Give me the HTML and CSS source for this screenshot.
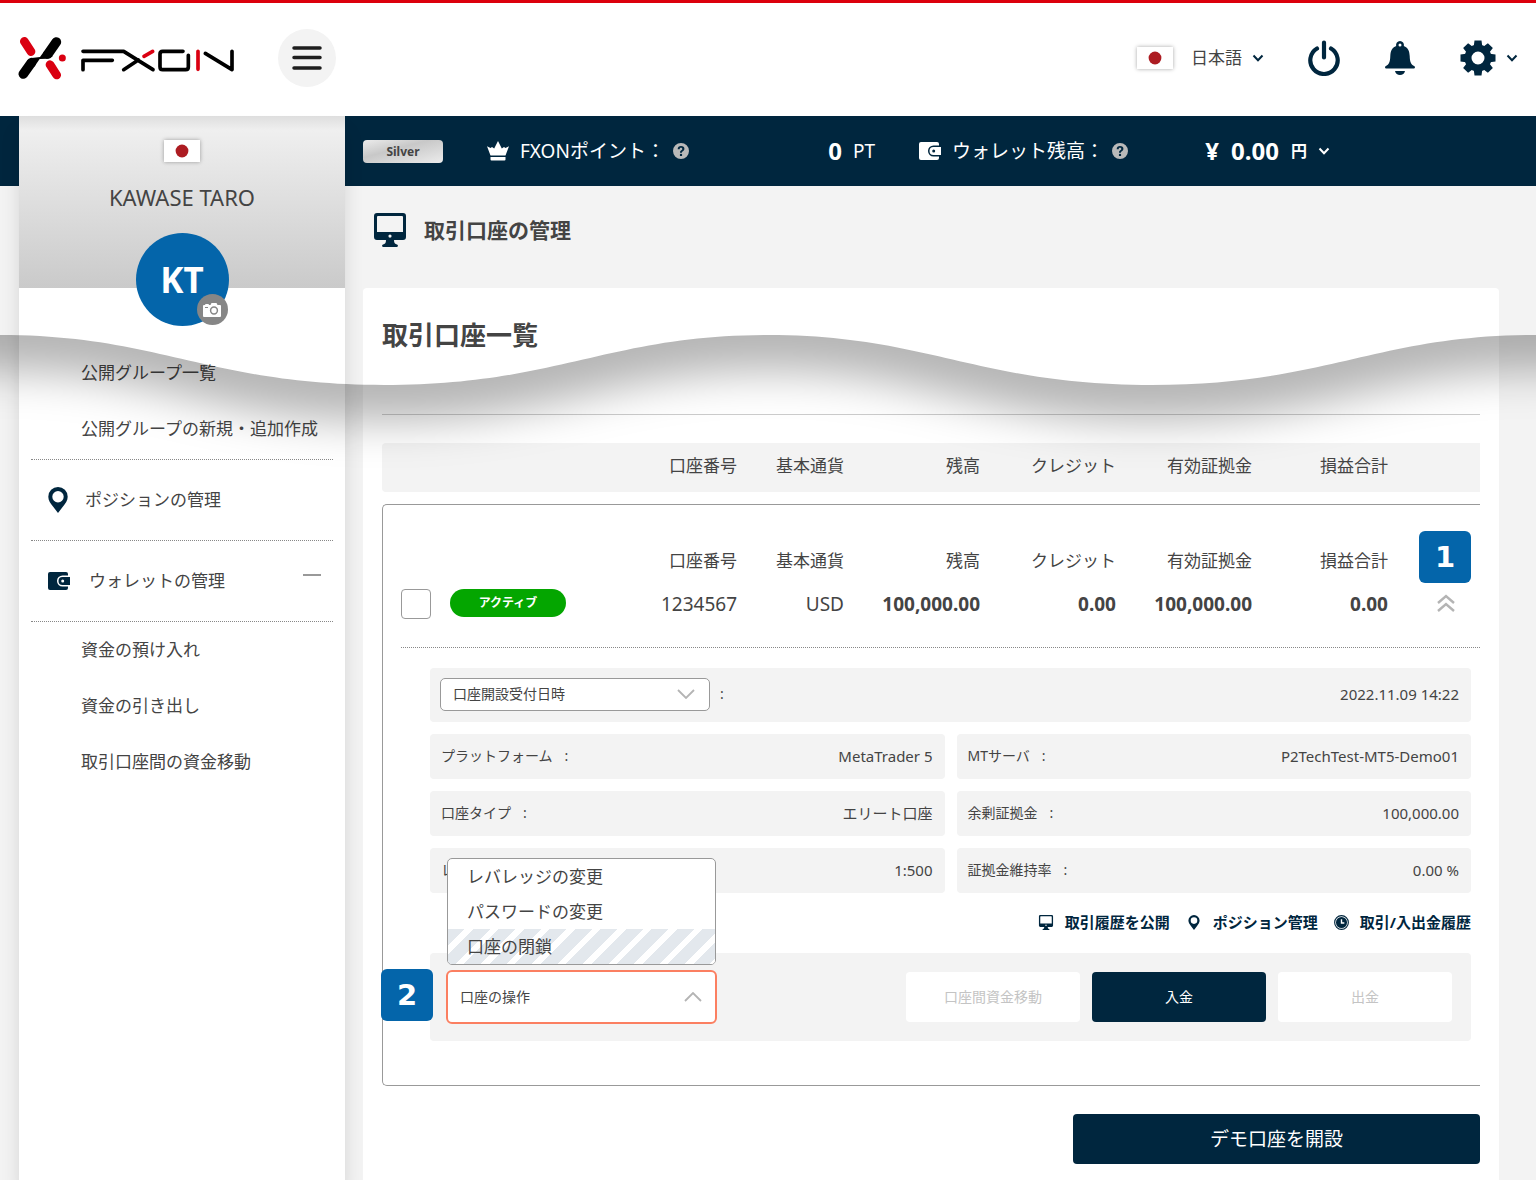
FILE: index.html
```html
<!DOCTYPE html>
<html lang="ja">
<head>
<meta charset="utf-8">
<meta name="viewport" content="width=device-width, initial-scale=1">
<title>取引口座の管理 | FXON</title>
<link rel="stylesheet" href="styles.css">
</head>
<body>
<svg class="sprite" aria-hidden="true">
  <symbol id="i-monitor" viewBox="0 0 32 34"><path fill-rule="evenodd" d="M3 0h26a3 3 0 0 1 3 3v21a3 3 0 0 1-3 3h-9c0 3 1 4 3 4.500a1.300 1.300 0 0 1 0 2.500H9a1.300 1.300 0 0 1 0-2.500c2-.5 3-1.500 3-4.500H3a3 3 0 0 1-3-3V3a3 3 0 0 1 3-3zm1 3a1 1 0 0 0-1 1v15h26V4a1 1 0 0 0-1-1zm12 18.500a1.600 1.600 0 1 0 0 3.200 1.600 1.600 0 0 0 0-3.200z"/></symbol>
  <symbol id="i-pin" viewBox="0 0 20 26"><path fill-rule="evenodd" d="M10 0a9.700 9.700 0 0 1 9.700 9.700c0 4-2.300 6.500-4.700 9.800L10 26l-5-6.500C2.600 16.200.3 13.700.3 9.700A9.700 9.700 0 0 1 10 0zm0 4a5.700 5.700 0 1 0 0 11.400A5.700 5.700 0 0 0 10 4z"/></symbol>
  <symbol id="i-wallet" viewBox="0 0 22 18"><path fill-rule="evenodd" d="M2 0h16a2 2 0 0 1 2 2v1.500h-5.500a5.500 5.500 0 0 0 0 11H20V16a2 2 0 0 1-2 2H2a2 2 0 0 1-2-2V2a2 2 0 0 1 2-2zm12.500 5H22v8h-7.500a4 4 0 0 1 0-8zm.2 2.500a1.500 1.500 0 1 0 0 3 1.500 1.500 0 0 0 0-3z"/></symbol>
  <symbol id="i-chevron" viewBox="0 0 12 8"><path d="M1.500 1.500 6 6.300l4.500-4.800" fill="none" stroke="currentColor" stroke-width="2"/></symbol>
  <symbol id="i-chevron-thin" viewBox="0 0 18 10"><path d="M1 1l8 8 8-8" fill="none" stroke="currentColor" stroke-width="1.800"/></symbol>
  <symbol id="i-help" viewBox="0 0 16 16"><path fill-rule="evenodd" d="M8 0a8 8 0 1 1 0 16A8 8 0 0 1 8 0zM4.700 6.200h2C6.700 5.300 7.200 4.800 8 4.800s1.300.4 1.300 1.100c0 .6-.3.900-1 1.400C7.400 7.900 7 8.500 7 9.700h1.900c0-.8.300-1 1-1.500.9-.6 1.500-1.300 1.500-2.400C11.400 4.200 10.200 3.100 8 3.100 6 3.100 4.700 4.200 4.700 6.200zM8 10.700a1.200 1.200 0 1 0 0 2.400 1.200 1.200 0 0 0 0-2.400z"/></symbol>
  <symbol id="i-crown" viewBox="0 0 22 20"><path d="M11 0l3.800 7.500L17 6l1.500 1L22 5.200 18.500 14.500h-15L0 5.200 3.500 7 5 6l2.200 1.500zM3.500 16h15v2.500a1 1 0 0 1-1 1h-13a1 1 0 0 1-1-1z"/></symbol>
  <symbol id="i-flag" viewBox="0 0 36 22"><path fill="#fff" d="M0 0h36v22H0z"/><circle cx="18" cy="11" r="6.400" fill="#ad1c22"/></symbol>
</svg>

<header class="header">
  <a class="logo" href="#" aria-label="FXON">
    <svg viewBox="54 108 654 132" width="218" height="44" fill="none" stroke-linecap="round">
      <g stroke="#da0011"><path stroke-width="26" d="M73 124l20 31M150 194l20 31"/><path stroke-width="11" d="M432 169l26-15M594 154v54"/></g>
      <circle cx="187" cy="174" r="10.500" fill="#da0011"/>
      <path stroke="#000" stroke-width="29" d="M169 126l-25 36M94 188l-24 34"/>
      <path fill="#000" d="M133 153l-13 18-25 3-14 8 22 18 16-23 23-1 16-7z"/>
      <path stroke="#000" stroke-width="11" stroke-linejoin="round" d="M249 209v-28h88M249 154h122l88 55M371 209l44-29M549 154h-61q-8 0-8 8v38q0 9 8 9h69q8 0 8-8v-35M616 160l80 49v-55"/>
    </svg>
  </a>
  <button class="menu-btn" type="button" aria-label="メニュー"><svg viewBox="0 0 30 24" width="30" height="24" stroke="#1e1e1e" stroke-width="3.500" stroke-linecap="round"><path d="M2 2h26M2 11.500h26M2 22h26"/></svg></button>
  <nav class="tools">
    <label class="lang"><svg class="flag" width="36" height="22"><use href="#i-flag"/></svg>
      <select class="plain-select" aria-label="言語"><option>日本語</option></select>
      <svg class="chev" width="12" height="8"><use href="#i-chevron"/></svg></label>
    <button class="icon-btn" type="button" aria-label="ログアウト"><svg viewBox="0 0 32 36" width="32" height="36" fill="none" stroke="currentColor" stroke-width="4.200" stroke-linecap="round"><path d="M9 8.500a13.700 13.700 0 1 0 14 0M16 2.500v15"/></svg></button>
    <button class="icon-btn" type="button" aria-label="お知らせ"><svg viewBox="0 0 30 34" width="30" height="34"><path fill-rule="evenodd" d="M15 0a4 4 0 0 1 3.800 5c4.200 1.500 5.700 5 5.900 10 .2 5.500 1 8.500 4.800 10.300.8.500.5 2.200-.4 2.200H.9c-.9 0-1.200-1.700-.4-2.200C4.300 23.500 5.100 20.500 5.300 15c.2-5 1.700-8.500 5.900-10A4 4 0 0 1 15 0zm0 2.500a1.500 1.500 0 1 0 0 3 1.500 1.500 0 0 0 0-3zM10 30h10c-.5 2.500-2.500 4-5 4s-4.500-1.500-5-4z"/></svg></button>
    <button class="icon-btn settings" type="button" aria-label="設定"><svg viewBox="-18 -18 36 36" width="36" height="36"><g fill="currentColor"><g id="teeth"><path id="tooth" d="M-4.500-10l1-7.500h7l1 7.500zM-4.500 10l1 7.500h7l1-7.500z"/><use href="#tooth" transform="rotate(90)"/></g><use href="#teeth" transform="rotate(45)"/></g><circle r="10" fill="#fff" stroke="currentColor" stroke-width="7"/></svg><svg class="chev" width="12" height="8"><use href="#i-chevron"/></svg></button>
  </nav>
</header>

<div class="shell">
  <aside class="sidebar">
    <div class="profile">
      <svg class="flag" width="36" height="22"><use href="#i-flag"/></svg>
      <p class="profile-name">KAWASE TARO</p>
      <div class="avatar">KT
        <button class="camera" type="button" aria-label="写真を変更"><svg viewBox="0 0 18 14" width="18" height="14"><path fill="#fff" d="M1 2h1l.5-1h3L6 2h1.500l1-2h5l1 2H17a1 1 0 0 1 1 1v10a1 1 0 0 1-1 1H1a1 1 0 0 1-1-1V3a1 1 0 0 1 1-1z"/><circle cx="11" cy="7.500" r="3.400" fill="none" stroke="#868686" stroke-width="1.500"/><path d="M2 4.500h3" stroke="#868686"/></svg></button>
      </div>
    </div>
    <nav class="side-nav">
      <ul class="sub"><li><a href="#">公開グループ一覧</a></li><li><a href="#">公開グループの新規・追加作成</a></li></ul>
      <a class="section" href="#"><svg class="pin" width="20" height="26"><use href="#i-pin"/></svg>ポジションの管理</a>
      <a class="section last" href="#"><svg width="22" height="18"><use href="#i-wallet"/></svg>ウォレットの管理<span class="minus"></span></a>
      <ul class="sub"><li><a href="#">資金の預け入れ</a></li><li><a href="#">資金の引き出し</a></li><li><a href="#">取引口座間の資金移動</a></li></ul>
    </nav>
  </aside>

  <main class="main">
    <div class="status">
      <span class="rank">Silver</span>
      <div class="stat points"><svg width="22" height="20"><use href="#i-crown"/></svg><span>FXONポイント：</span><svg class="help" width="16" height="16"><use href="#i-help"/></svg><strong>0</strong><span>PT</span></div>
      <div class="stat balance"><svg width="22" height="18"><use href="#i-wallet"/></svg><span>ウォレット残高：</span><svg class="help" width="16" height="16"><use href="#i-help"/></svg><strong>¥</strong><strong>0.00</strong>
        <label class="currency"><select class="plain-select" aria-label="通貨"><option>円</option></select><svg class="chev" width="12" height="8"><use href="#i-chevron"/></svg></label></div>
    </div>
    <h1 class="page-title"><svg width="32" height="34"><use href="#i-monitor"/></svg>取引口座の管理</h1>

    <section class="card">
      <h2 class="card-title">取引口座一覧</h2>
      <hr class="rule">
      <table class="accounts head">
        <colgroup><col><col class="c-cur"><col class="c-num"><col class="c-num"><col class="c-num"><col class="c-num"><col class="c-end"></colgroup>
        <thead><tr><th>口座番号</th><th>基本通貨</th><th>残高</th><th>クレジット</th><th>有効証拠金</th><th>損益合計</th><th></th></tr></thead>
      </table>

      <article class="account">
        <table class="accounts row">
          <colgroup><col class="c-check"><col><col class="c-cur"><col class="c-num"><col class="c-num"><col class="c-num"><col class="c-num"><col class="c-end"></colgroup>
          <thead><tr><th></th><th>口座番号</th><th>基本通貨</th><th>残高</th><th>クレジット</th><th>有効証拠金</th><th>損益合計</th><th><span class="step step-1">1</span></th></tr></thead>
          <tbody><tr>
            <td><div class="pick"><input class="check" type="checkbox" aria-label="口座 1234567 を選択"><span class="pill">アクティブ</span></div></td>
            <td>1234567</td><td>USD</td><td class="b">100,000.00</td><td class="b">0.00</td><td class="b">100,000.00</td><td class="b">0.00</td>
            <td><button class="collapse" type="button" aria-label="閉じる"><svg viewBox="0 0 18 18" width="18" height="18" fill="none" stroke="#b4b4b4" stroke-width="2.400"><path d="M1 9l8-7 8 7M1 17l8-7 8 7"/></svg></button></td>
          </tr></tbody>
        </table>

        <div class="details">
          <div class="field wide"><label class="drop"><select class="box-select" aria-label="日時の種類"><option>口座開設受付日時</option></select><svg class="drop-icon" width="18" height="10"><use href="#i-chevron-thin"/></svg></label><span class="colon">:</span><span class="value">2022.11.09 14:22</span></div>
          <div class="field"><span>プラットフォーム</span><span class="colon">:</span><span class="value">MetaTrader 5</span></div>
          <div class="field"><span>MTサーバ</span><span class="colon">:</span><span class="value">P2TechTest-MT5-Demo01</span></div>
          <div class="field"><span>口座タイプ</span><span class="colon">:</span><span class="value">エリート口座</span></div>
          <div class="field"><span>余剰証拠金</span><span class="colon">:</span><span class="value">100,000.00</span></div>
          <div class="field"><span>レバレッジ</span><span class="colon">:</span><span class="value">1:500</span></div>
          <div class="field"><span>証拠金維持率</span><span class="colon">:</span><span class="value">0.00 %</span></div>
        </div>

        <div class="links">
          <a href="#"><svg width="16" height="15"><use href="#i-monitor"/></svg>取引履歴を公開</a>
          <a href="#"><svg width="16" height="15"><use href="#i-pin"/></svg>ポジション管理</a>
          <a href="#"><svg viewBox="0 0 16 16" width="15" height="15"><circle cx="8" cy="8" r="7.300" fill="none" stroke="currentColor" stroke-width="1.200"/><circle cx="8" cy="8" r="5.900"/><path d="M8 4.500V8.500h3" fill="none" stroke="#fff" stroke-width="1.500"/></svg>取引/入出金履歴</a>
        </div>

        <div class="ops">
          <span class="step step-2">2</span>
          <div class="drop">
            <ul class="menu"><li><a href="#">レバレッジの変更</a></li><li><a href="#">パスワードの変更</a></li><li class="hover"><a href="#">口座の閉鎖</a></li></ul>
            <select class="box-select open" aria-label="口座の操作"><option>口座の操作</option></select><svg class="drop-icon up" width="18" height="10"><use href="#i-chevron-thin"/></svg>
          </div>
          <div class="actions"><button class="btn" type="button" disabled>口座間資金移動</button><button class="btn primary" type="button">入金</button><button class="btn" type="button" disabled>出金</button></div>
        </div>
      </article>
      <button class="demo" type="button">デモ口座を開設</button>
    </section>
  </main>
</div>

<svg class="wave" viewBox="0 0 1536 180" preserveAspectRatio="none" aria-hidden="true">
  <defs>
    <filter id="soft" x="-10%" y="-50%" width="120%" height="200%"><feGaussianBlur stdDeviation="22"/></filter>
    <clipPath id="below"><path d="M0 15C160 15 210 65 384 65S608 15 768 15s210 50 384 50 224-50 384-50v165H0z"/></clipPath>
  </defs>
  <g clip-path="url(#below)"><path filter="url(#soft)" fill="#000" fill-opacity=".29" d="M-384-100V101C-210 101-160 51 0 51s210 50 384 50S608 51 768 51s210 50 384 50 224-50 384-50 210 50 384 50v-201z"/></g>
</svg>
</body>
</html>
```
FILE: styles.css
```css
:root {
  --navy: #00263e;
  --blue: #0465aa;
  --grey: #f3f3f3;
  --line: #999;
  --text: #444;
}

* { box-sizing: border-box; }

body {
  margin: 0;
  min-height: 100vh;
  position: relative;
  display: flex;
  flex-direction: column;
  background: var(--grey);
  color: var(--text);
  font: 17px/24px "Noto Sans", "Noto Sans CJK JP", sans-serif;
}

button, select, input { font: inherit; color: inherit; margin: 0; }
button { border: 0; padding: 0; background: none; cursor: pointer; }
a { color: inherit; text-decoration: none; }
ul { list-style: none; margin: 0; padding: 0; }
svg { flex: none; }
svg:not([fill]) { fill: currentColor; }
.sprite { position: absolute; width: 0; height: 0; }

/* Header */
.header {
  display: flex;
  align-items: center;
  height: 116px;
  padding: 0 18px 4px;
  border-top: 3px solid #dc000c;
  background: #fff;
  color: var(--navy);
}
.logo { display: flex; }
.menu-btn {
  display: flex;
  align-items: center;
  justify-content: center;
  width: 58px;
  height: 58px;
  margin-left: 42px;
  border-radius: 50%;
  background: var(--grey);
}
.tools { display: flex; align-items: center; margin-left: auto; }
.lang { display: flex; align-items: center; margin-right: 44px; }
.flag { box-shadow: 0 0 4px rgba(0, 0, 0, .35); }
.plain-select {
  appearance: none;
  padding: 0;
  border: 0;
  background: none;
}
.lang .plain-select { margin: 0 10px 0 18px; color: var(--text); }
.icon-btn { display: flex; align-items: center; margin-right: 45px; }
.settings { gap: 10px; margin-right: 0; }

/* Shell */
.shell {
  flex: 1;
  display: flex;
  padding-left: 19px;
  background: linear-gradient(var(--navy), var(--navy)) top / 100% 70px no-repeat;
}

/* Sidebar */
.sidebar {
  position: relative;
  flex: none;
  width: 326px;
  background: #fff;
  box-shadow: 0 16px 18px rgba(0, 0, 0, .12);
}
.profile {
  display: flex;
  flex-direction: column;
  align-items: center;
  height: 172px;
  padding-top: 24px;
  background: linear-gradient(#dedede, #efefef 14px, #cacaca);
}
.profile-name { margin: 21px 0 22px; font-size: 22px; line-height: 28px; }
.avatar {
  position: relative;
  flex: none;
  width: 93px;
  height: 93px;
  border-radius: 50%;
  background: var(--blue);
  color: #fff;
  font-size: 35px;
  font-weight: 700;
  line-height: 93px;
  text-align: center;
}
.camera {
  position: absolute;
  right: 1px;
  bottom: 1px;
  display: flex;
  align-items: center;
  justify-content: center;
  width: 31px;
  height: 31px;
  border-radius: 50%;
  background: #868686;
}
.side-nav { padding: 57px 12px 0; }
.sub a { display: block; padding: 16px 0 16px 50px; white-space: nowrap; }
.section {
  display: flex;
  align-items: center;
  height: 81px;
  padding: 0 12px 0 17px;
  border-top: 1px dotted #888;
  gap: 19px;
}
.sub + .section { margin-top: 2px; }
.section svg { color: var(--navy); }
.section .pin { margin-right: -2px; }
.section.last { height: 82px; border-bottom: 1px dotted #888; }
.minus { width: 18px; height: 2px; margin: 0 0 12px auto; background: #999; }

/* Status bar */
.main { flex: 1; min-width: 0; }
.status {
  display: flex;
  align-items: center;
  height: 70px;
  padding-left: 18px;
  color: #fff;
}
.rank {
  width: 80px;
  margin-right: 44px;
  border-radius: 4px;
  background: linear-gradient(165deg, #ececec, #c8c8c8 40%, #ececec);
  color: var(--text);
  font-size: 12px;
  font-weight: 700;
  line-height: 23px;
  text-align: center;
}
.stat { display: flex; align-items: center; font-size: 19px; line-height: 28px; white-space: nowrap; }
.stat strong { font-size: 24px; }
.stat .help { margin-left: 8px; color: #b9b9b9; }
.stat > span { margin-left: 11px; }
.stat .help + strong { margin-left: auto; }
.points { width: 388px; margin-right: 44px; }
.balance { width: 411px; }
.balance strong + strong { margin-left: 12px; }
.currency { display: flex; align-items: center; margin-left: 12px; }
.currency .plain-select { margin-right: 10px; font-size: 16px; font-weight: 700; }

.page-title {
  display: flex;
  align-items: center;
  gap: 18px;
  height: 102px;
  margin: 0;
  padding: 0 0 14px 29px;
  font-size: 21px;
  line-height: 30px;
}
.page-title svg { color: var(--navy); }

/* Accounts card */
.card {
  margin: 0 37px 0 18px;
  padding: 29px 19px 16px;
  border-radius: 4px 4px 0 0;
  background: #fff;
}
.card-title { margin: 0; font-size: 26px; line-height: 36px; }
.rule { margin: 61px 0 28px; border: 0; border-top: 1px solid #ccc; }

.accounts { width: 100%; table-layout: fixed; border-collapse: collapse; }
.accounts th, .accounts td {
  padding: 0;
  font-weight: 400;
  text-align: right;
  white-space: nowrap;
}
.accounts td { height: 44px; font-size: 19px; }
.accounts .b { font-weight: 700; }
.c-check { width: 165px; }
.c-cur { width: 107px; }
.c-num { width: 136px; }
.c-end { width: 92px; }
.head { background: var(--grey); border-radius: 4px 0 0 4px; }
.accounts.head th { height: 49px; padding-bottom: 4px; }

.account {
  margin: 12px 0 28px;
  padding-left: 18px;
  border: 1px solid var(--line);
  border-right: 0;
  border-radius: 5px 0 0 5px;
}
.accounts.row th { position: relative; height: 77px; padding-top: 35px; }
.row { margin-bottom: 21px; }
.pick { display: flex; align-items: center; gap: 19px; }
.check {
  appearance: none;
  flex: none;
  width: 30px;
  height: 30px;
  border: 1px solid var(--line);
  border-radius: 4px;
}
.pill {
  flex: none;
  width: 116px;
  margin-bottom: 2px;
  border-radius: 14px;
  background: #04a600;
  color: #fff;
  font-size: 12px;
  font-weight: 700;
  line-height: 28px;
  text-align: center;
}
.collapse { margin-right: 25px; padding-bottom: 4px; vertical-align: middle; }
.collapse svg { display: block; }

.step {
  position: absolute;
  width: 52px;
  height: 52px;
  border-radius: 6px;
  background: var(--blue);
  color: #fff;
  font: 700 29px/52px "DejaVu Sans", sans-serif;
  text-align: center;
}
.step-1 { top: 26px; right: 9px; }
.step-2 { top: 16px; left: -49px; }

.details {
  display: grid;
  grid-template-columns: 1fr 1fr;
  gap: 12px;
  padding: 20px 9px 0 29px;
  border-top: 1px dotted #888;
  font-size: 14px;
}
.field {
  display: flex;
  align-items: center;
  height: 45px;
  padding: 0 12px 2px 11px;
  border-radius: 4px;
  background: var(--grey);
  white-space: nowrap;
}
.wide { grid-column: 1 / -1; height: 54px; padding-left: 10px; }
.colon { margin-left: 12px; }
.wide .colon { margin-left: 10px; }
.value { margin-left: auto; font-size: 15px; }

.drop { position: relative; display: flex; width: 270px; }
.box-select {
  appearance: none;
  width: 100%;
  height: 33px;
  padding: 0 12px;
  border: 1px solid var(--line);
  border-radius: 5px;
  background: #fff;
  font-size: 14px;
}
.drop-icon { position: absolute; right: 15px; top: 50%; margin-top: -5px; color: #b4b4b4; pointer-events: none; }
.drop-icon.up { transform: rotate(180deg); }

.links {
  display: flex;
  justify-content: flex-end;
  gap: 16px;
  padding: 17px 9px 19px;
  color: var(--navy);
  font-size: 15px;
  font-weight: 700;
}
.links a { display: flex; align-items: center; gap: 11px; }

.ops {
  position: relative;
  display: flex;
  align-items: center;
  justify-content: space-between;
  height: 88px;
  margin: 0 9px 44px 29px;
  padding: 0 19px 0 16px;
  border-radius: 4px;
  background: var(--grey);
}
.ops .drop { width: 271px; }
.box-select.open { height: 54px; border: 2px solid #fb7f61; border-radius: 6px; }
.menu {
  position: absolute;
  bottom: 100%;
  left: 1px;
  right: 1px;
  margin-bottom: 5px;
  overflow: hidden;
  border: 1px solid var(--line);
  border-radius: 5px;
  background: #fff;
}
.menu a { display: block; padding-left: 19px; line-height: 35px; }
.hover { background: repeating-linear-gradient(135deg, #e3e8ed 0 12px, #fff 12px 18px); }

.actions { display: flex; gap: 12px; }
.btn {
  width: 174px;
  height: 50px;
  border-radius: 4px;
  background: #fff;
  color: #c4c4c4;
  font-size: 14px;
}
.btn.primary { background: var(--navy); color: #fff; }
.demo {
  display: block;
  width: 407px;
  height: 50px;
  margin-left: auto;
  border-radius: 4px;
  background: var(--navy);
  color: #fff;
  font-size: 19px;
}

/* Torn-page wave laid over the page */
.wave {
  position: absolute;
  top: 320px;
  left: 0;
  width: 100%;
  height: 180px;
  pointer-events: none;
}
```
